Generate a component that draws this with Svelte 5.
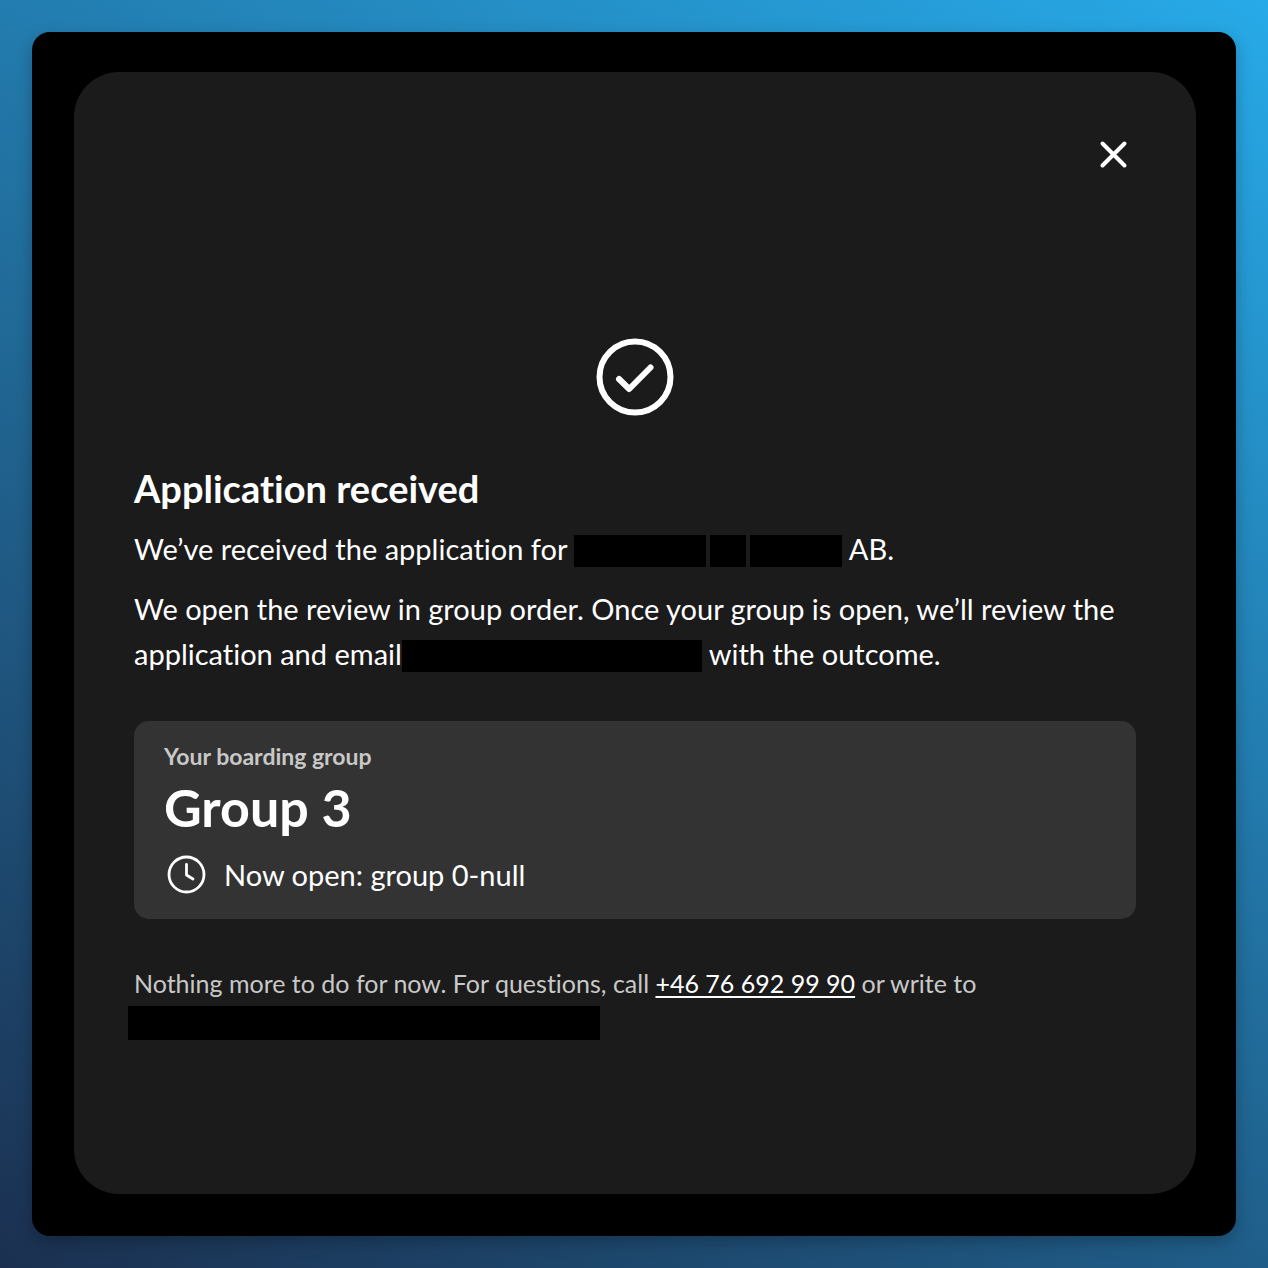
<script lang="ts">
	let open = $state(true);

	const group = 3;
	const nowOpen = 'group 0-null';
	const phone = '+46 76 692 99 90';
</script>

<main>
	<div class="stage">
		{#if open}
			<div class="dialog" role="dialog" aria-labelledby="title">
				<button class="close" type="button" aria-label="Close" onclick={() => (open = false)}>
					<svg viewBox="0 0 45 45" width="45" height="45" aria-hidden="true">
						<path d="M11.5 11.5 33.5 33.500M33.5 11.500 11.5 33.5" />
					</svg>
				</button>

				<svg class="check" viewBox="0 0 90 90" width="90" height="90" aria-hidden="true">
					<circle cx="45" cy="45" r="35.5" />
					<path d="M29 47 39.2 57 60.5 35.5" />
				</svg>

				<h1 id="title">Application received</h1>
				<p>
					We’ve received the application for
					<span class="names"><i class="long"></i><i class="short"></i><i class="medium"></i></span>
					AB.
				</p>
				<p>
					We open the review in group order. Once your group is open, we’ll review the application
					and email<span class="names email"><i></i></span>
					with the outcome.
				</p>

				<section class="card">
					<span class="label">Your boarding group</span>
					<strong>Group {group}</strong>
					<div class="status">
						<svg viewBox="0 0 45 45" width="45" height="45" aria-hidden="true">
							<circle cx="22.5" cy="22.5" r="17.5" />
							<path d="M22.5 12.5V23L29 27" />
						</svg>
						<span>Now open: {nowOpen}</span>
					</div>
				</section>

				<footer>
					Nothing more to do for now. For questions, call
					<a href="tel:+46766929990">{phone}</a> or write to
					<div class="contact"></div>
				</footer>
			</div>
		{/if}
	</div>
</main>

<style>
	:global(body) {
		margin: 0;
	}
	main {
		box-sizing: border-box;
		min-height: 100vh;
		padding: 32px;
		display: grid;
		background: linear-gradient(211deg, #27aae8, #1b3050);
		font-family: Lato, sans-serif;
		font-size: 29px;
		font-variant-ligatures: none;
		line-height: 45px;
		color: #fff;
	}
	.stage {
		padding: 40px 40px 42px 42px;
		display: grid;
		background: #000;
		border-radius: 18px;
		box-shadow: 0 6px 16px rgba(0, 0, 0, 0.25);
	}
	.dialog {
		display: flex;
		flex-direction: column;
		padding: 60px;
		background: #1b1b1b;
		border-radius: 45px;
	}
	svg {
		display: block;
		fill: none;
		stroke: currentColor;
		stroke-linecap: round;
		stroke-linejoin: round;
	}
	.close {
		align-self: flex-end;
		padding: 0;
		border: 0;
		background: none;
		color: inherit;
		cursor: pointer;
	}
	.close svg {
		stroke-width: 4;
	}
	.check {
		align-self: center;
		margin: 155px 0 44px;
		stroke-width: 6;
	}
	h1 {
		margin: 0;
		font-size: 38px;
		font-weight: 700;
		line-height: 45px;
	}
	p {
		margin: 15px 0 0;
	}
	.names {
		display: inline-flex;
		gap: 4px;
		vertical-align: -7px;
	}
	.names i {
		height: 32px;
		background: #000;
	}
	.long {
		width: 132px;
	}
	.short {
		width: 36px;
	}
	.medium {
		width: 92px;
	}
	.email i {
		width: 300px;
	}
	.card {
		display: flex;
		flex-direction: column;
		margin: 45px 0 44px;
		padding: 20px 30px 22px;
		background: #333;
		border-radius: 15px;
	}
	.label {
		font-size: 23px;
		font-weight: 700;
		line-height: 30px;
		color: #c8c8c8;
	}
	strong {
		font-size: 52px;
		line-height: 72px;
	}
	.status {
		display: flex;
		align-items: center;
		gap: 15px;
		margin-top: 9px;
	}
	.status svg {
		stroke-width: 2.8;
	}
	footer {
		font-size: 25px;
		line-height: 40px;
		color: #c8c8c8;
	}
	a {
		color: #fff;
		text-decoration-thickness: 2px;
		text-underline-offset: 3px;
	}
	.contact {
		max-width: 472px;
		height: 34px;
		margin: 3px 0 0 -6px;
		background: #000;
	}
</style>
